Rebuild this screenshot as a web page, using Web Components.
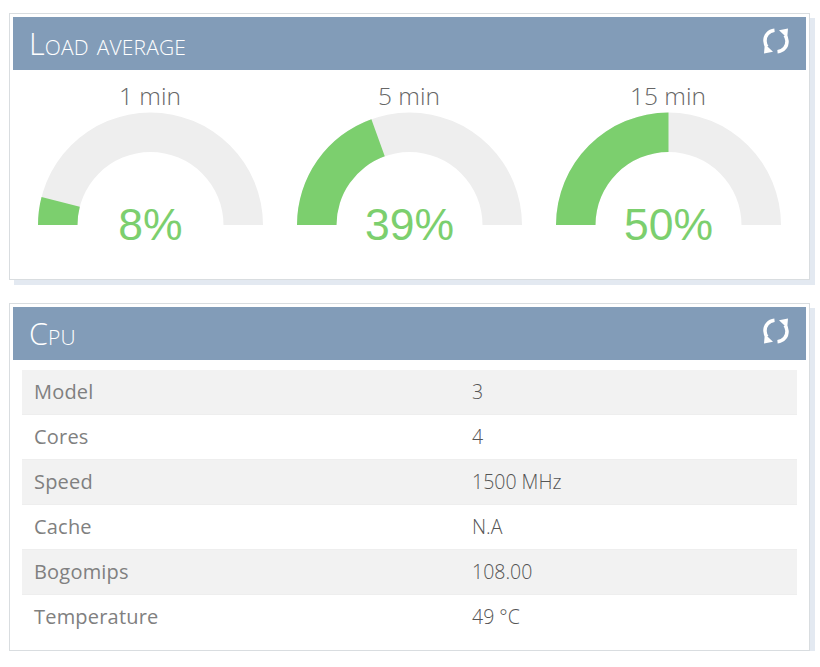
<!DOCTYPE html>
<html>
<head>
<meta charset="utf-8">
<title>Load average</title>
<style>
html, body { margin: 0; background: #fff; }
body { padding: 13px 0 0 9px; font-family: "Open Sans", "Liberation Sans", sans-serif; }
</style>
</head>
<body>
<dash-panel title-text="Load average" style="height:267px">
  <div style="display:flex;justify-content:center;padding-top:8px">
    <load-gauge label="1 min" value="8"></load-gauge>
    <load-gauge label="5 min" value="39"></load-gauge>
    <load-gauge label="15 min" value="50"></load-gauge>
  </div>
</dash-panel>
<dash-panel title-text="Cpu" style="height:348px;margin-top:23px">
  <info-table>
    <info-row label="Model" value="3"></info-row>
    <info-row label="Cores" value="4"></info-row>
    <info-row label="Speed" value="1500 MHz"></info-row>
    <info-row label="Cache" value="N.A"></info-row>
    <info-row label="Bogomips" value="108.00"></info-row>
    <info-row label="Temperature" value="49 °C"></info-row>
  </info-table>
</dash-panel>
<script>
class DashPanel extends HTMLElement {
    constructor() {
        super();
        this.attachShadow({ mode: 'open' });
    }

    connectedCallback() {
        this.shadowRoot.innerHTML = `
            <style>
                :host {
                    display: block;
                    box-sizing: border-box;
                    width: 801px;
                    padding: 3px;
                    background: #fff;
                    border: 1px solid #d9dde0;
                    box-shadow: 5px 5px 0 #e3e9f1;
                }
                header {
                    display: flex;
                    align-items: center;
                    justify-content: space-between;
                    height: 53px;
                    padding: 0 17px 0 16px;
                    background: #829cb8;
                    color: #fff;
                    font: 300 30.500px "Open Sans", "Liberation Sans", sans-serif;
                    font-variant: small-caps;
                    letter-spacing: .15px;
                }
                span { margin-top: -1px; }
                svg { display: block; margin-top: -6px; }
            </style>
            <header>
                <span>${this.getAttribute('title-text')}</span>
                <svg width="26" height="26" viewBox="0 0 26 26">
                    <path d="M11.500 2.200C5.500 2.800 1.800 7.500 2 13c.1 2.300.8 4.200 2 5.800M14.500 23.800C20.500 23.200 24.200 18.500 24 13c-.1-2.300-.8-4.200-2-5.800" fill="none" stroke="#fff" stroke-width="3.500"/>
                    <path d="M1 25.500L1.800 16 10 23.800zM25 .500L24.200 10 16 2.200z" fill="#fff"/>
                </svg>
            </header>
            <slot></slot>
        `;
    }
}

class LoadGauge extends HTMLElement {
    constructor() {
        super();
        this.attachShadow({ mode: 'open' });
    }

    connectedCallback() {
        const value = Number(this.getAttribute('value'));
        const a = Math.PI * (1 - value / 100);
        const cx = 129.5, cy = 147, r1 = 112.5, r2 = 73;
        const pt = (r) => (cx + r * Math.cos(a)).toFixed(2) + ' ' + (cy - r * Math.sin(a)).toFixed(2);
        this.shadowRoot.innerHTML = `
            <style>
                :host { display: block; width: 259px; }
                svg { display: block; }
                .label { font: 300 24.500px "Open Sans", "Liberation Sans", sans-serif; fill: #666; }
                .value { font: 44.500px "Liberation Sans", Arial, sans-serif; fill: #7ccf6e; }
            </style>
            <svg width="259" height="175" viewBox="0 0 259 175">
                <text class="label" x="${cx - 0.5}" y="27" text-anchor="middle">${this.getAttribute('label')}</text>
                <path d="M${cx - r1} ${cy}A${r1} ${r1} 0 0 1 ${cx + r1} ${cy}H${cx + r2}A${r2} ${r2} 0 0 0 ${cx - r2} ${cy}Z" fill="#eeeeee"/>
                <path d="M${cx - r1} ${cy}A${r1} ${r1} 0 0 1 ${pt(r1)}L${pt(r2)}A${r2} ${r2} 0 0 0 ${cx - r2} ${cy}Z" fill="#7ccf6e"/>
                <text class="value" x="${cx}" y="162" text-anchor="middle">${value}%</text>
            </svg>
        `;
    }
}

class InfoTable extends HTMLElement {
    constructor() {
        super();
        this.attachShadow({ mode: 'open' });
    }

    connectedCallback() {
        this.shadowRoot.innerHTML = `
            <style>
                :host { display: block; padding: 10px 9px 0; }
            </style>
            <slot></slot>
        `;
    }
}

class InfoRow extends HTMLElement {
    constructor() {
        super();
        this.attachShadow({ mode: 'open' });
    }

    connectedCallback() {
        this.shadowRoot.innerHTML = `
            <style>
                :host {
                    display: grid;
                    grid-template-columns: 438px 1fr;
                    box-sizing: border-box;
                    height: 45px;
                    padding: 0 12px 2px;
                    align-items: center;
                    border-bottom: 1px solid #eeeeee;
                    font: 20px "Open Sans", "Liberation Sans", sans-serif;
                }
                :host(:nth-child(odd)) { background: #f2f2f2; }
                :host(:last-child) { border-bottom: 0; }
                .k { color: #808080; letter-spacing: .2px; }
                .v { color: #555; font-weight: 300; font-size: 19.500px; }
            </style>
            <span class="k">${this.getAttribute('label')}</span>
            <span class="v">${this.getAttribute('value')}</span>
        `;
    }
}

customElements.define('dash-panel', DashPanel);
customElements.define('load-gauge', LoadGauge);
customElements.define('info-table', InfoTable);
customElements.define('info-row', InfoRow);
</script>
</body>
</html>
